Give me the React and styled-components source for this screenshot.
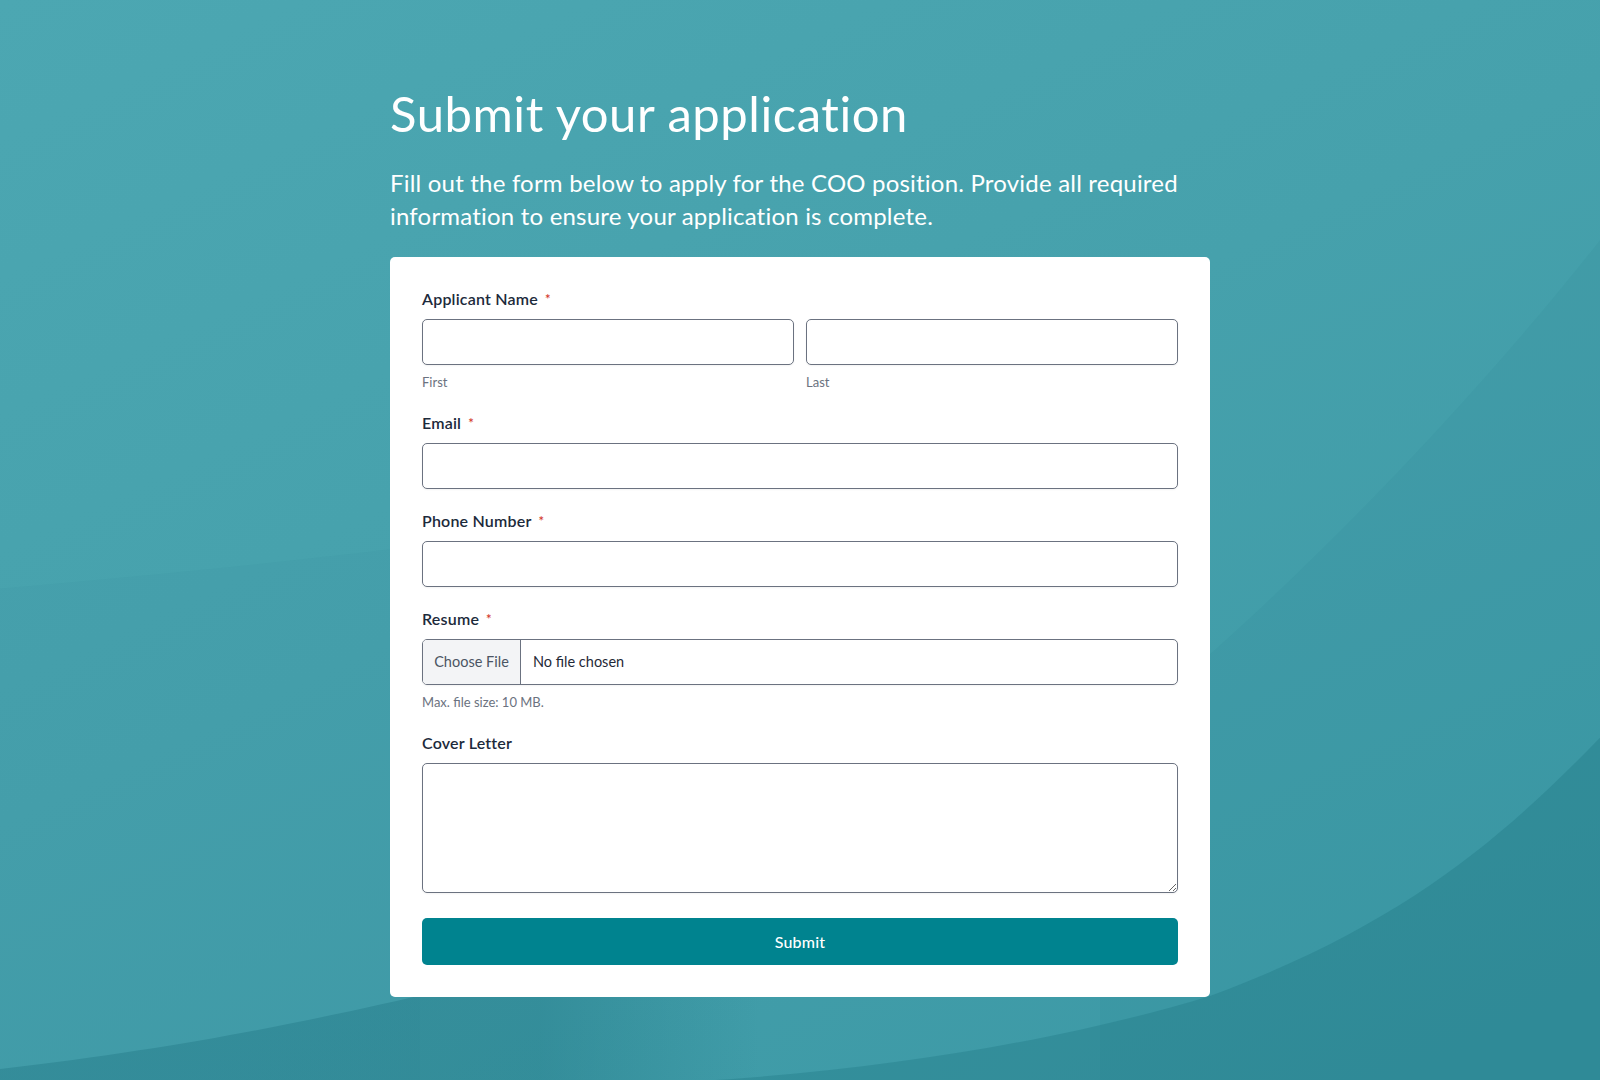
import React from 'react';
import styled, { createGlobalStyle } from 'styled-components';

const GlobalStyle = createGlobalStyle`
  html, body {
    margin: 0;
    padding: 0;
  }
  body {
    font-family: Lato, "Open Sans", "Liberation Sans", sans-serif;
    background: #4aa5b0;
  }
  * {
    box-sizing: border-box;
  }
`;

const Page = styled.main`
  position: relative;
  min-height: 1080px;
  overflow: hidden;
  background: linear-gradient(155deg, #4ca7b2 0%, #46a1ac 45%, #3b98a5 100%);
`;

// decorative sweeping shapes behind the form
const Backdrop = styled.svg`
  position: absolute;
  inset: 0;
  width: 100%;
  height: 100%;
  pointer-events: none;
`;

const Content = styled.div`
  position: relative;
  width: 820px;
  margin: 0 auto;
  padding: 84px 0 84px;
`;

const Title = styled.h1`
  margin: 0 0 23px;
  font-size: 49px;
  line-height: 1.2;
  font-weight: 400;
  letter-spacing: 0.55px;
  color: #ffffff;
`;

const Intro = styled.p`
  margin: 0 0 24px;
  font-size: 24px;
  line-height: 1.4;
  font-weight: 400;
  letter-spacing: 0.2px;
  color: #ffffff;
`;

const Card = styled.form`
  background: #ffffff;
  border-radius: 5px;
  padding: 31px 32px 32px;
`;

const Field = styled.div`
  margin-bottom: ${(p) => (p.$last ? '25px' : '21px')};
`;

const Label = styled.label`
  display: block;
  margin-bottom: ${(p) => (p.$loose ? '9px' : '8px')};
  font-size: 16px;
  line-height: 22px;
  font-weight: 600;
  letter-spacing: 0.2px;
  color: #1c2a3b;
`;

const Star = styled.span`
  margin-left: 7px;
  font-size: 13px;
  position: relative;
  top: -1px;
  color: #d33a2c;
`;

const Row = styled.div`
  display: grid;
  grid-template-columns: 1fr 1fr;
  gap: 12px;
`;

const Input = styled.input`
  display: block;
  width: 100%;
  height: 46px;
  padding: 0 12px;
  border: 1px solid #6b7280;
  border-radius: 5px;
  background: #ffffff;
  box-shadow: 0 1px 2px rgba(0, 0, 0, 0.05);
  font: inherit;
  font-size: 15px;
  color: #1f2937;
  outline: none;
`;

const Hint = styled.div`
  margin-top: 9px;
  font-size: 13px;
  line-height: 17px;
  color: #6b7280;
`;

const FileBox = styled.div`
  display: flex;
  align-items: stretch;
  height: 46px;
  border: 1px solid #6b7280;
  border-radius: 5px;
  overflow: hidden;
  box-shadow: 0 1px 2px rgba(0, 0, 0, 0.05);
`;

const FileButton = styled.button`
  width: 98px;
  padding: 0;
  border: none;
  border-right: 1px solid #6b7280;
  background: #f3f4f6;
  font: inherit;
  font-size: 14.5px;
  color: #4b5563;
  cursor: pointer;
`;

const FileName = styled.span`
  display: flex;
  align-items: center;
  padding-left: 12px;
  font-size: 14.5px;
  color: #1f2937;
`;

const TextArea = styled.textarea`
  display: block;
  width: 100%;
  height: 130px;
  padding: 10px 12px;
  border: 1px solid #6b7280;
  border-radius: 5px;
  box-shadow: 0 1px 2px rgba(0, 0, 0, 0.05);
  font: inherit;
  font-size: 15px;
  resize: vertical;
  outline: none;
`;

const Submit = styled.button`
  display: block;
  width: 100%;
  height: 47px;
  border: none;
  border-radius: 5px;
  background: #00838f;
  color: #ffffff;
  font: inherit;
  font-size: 16px;
  font-weight: 500;
  letter-spacing: 0.2px;
  cursor: pointer;
`;

const App = () => {
  return (
    <Page>
      <GlobalStyle />
      <Backdrop viewBox="0 0 1600 1080" preserveAspectRatio="none">
        <defs>
          <linearGradient id="leftFade" gradientUnits="userSpaceOnUse" x1="540" y1="0" x2="760" y2="0">
            <stop offset="0" stopColor="#1d7280" stopOpacity="0.36" />
            <stop offset="1" stopColor="#1d7280" stopOpacity="0" />
          </linearGradient>
        </defs>
        <path d="M0 588 C 150 575 300 560 420 545 L420 1080 L0 1080 Z" fill="#1f6f7c" opacity="0.04" />
        <path d="M1100 745 C 1250 630 1450 430 1600 240 L1600 1080 L1100 1080 Z" fill="#1f6f7c" opacity="0.07" />
        <path d="M0 1068 C 200 1045 330 1015 440 990 L800 990 L800 1080 L0 1080 Z" fill="url(#leftFade)" />
        <path d="M700 1080 C 900 1068 1080 1035 1210 995 C 1400 925 1500 840 1600 737 L1600 1080 Z" fill="#1d7280" opacity="0.32" />
      </Backdrop>
      <Content>
        <Title>Submit your application</Title>
        <Intro>
          Fill out the form below to apply for the COO position. Provide all required
          information to ensure your application is complete.
        </Intro>
        <Card onSubmit={(e) => e.preventDefault()}>
          <Field>
            <Label>
              Applicant Name<Star>*</Star>
            </Label>
            <Row>
              <div>
                <Input type="text" />
                <Hint>First</Hint>
              </div>
              <div>
                <Input type="text" />
                <Hint>Last</Hint>
              </div>
            </Row>
          </Field>

          <Field>
            <Label>
              Email<Star>*</Star>
            </Label>
            <Input type="email" />
          </Field>

          <Field>
            <Label>
              Phone Number<Star>*</Star>
            </Label>
            <Input type="tel" />
          </Field>

          <Field>
            <Label>
              Resume<Star>*</Star>
            </Label>
            <FileBox>
              <FileButton type="button">Choose File</FileButton>
              <FileName>No file chosen</FileName>
            </FileBox>
            <Hint>Max. file size: 10 MB.</Hint>
          </Field>

          <Field $last>
            <Label $loose>Cover Letter</Label>
            <TextArea />
          </Field>

          <Submit type="submit">Submit</Submit>
        </Card>
      </Content>
    </Page>
  );
};

export default App;
